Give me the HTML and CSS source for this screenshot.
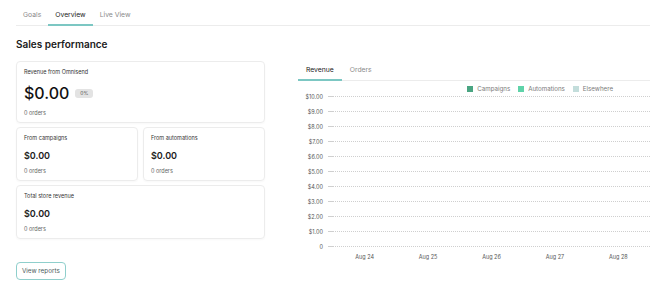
FILE: index.html
```html
<!DOCTYPE html>
<html lang="en">
<head>
    <meta charset="UTF-8">
    <link rel="stylesheet" href="styles.css">
</head>
<body>
    <nav class="tabs">
        <span class="tab">Goals</span>
        <span class="tab active">Overview</span>
        <span class="tab">Live View</span>
    </nav>

    <h2 class="title">Sales performance</h2>

    <div class="content">
        <div class="cards">
            <div class="card">
                <div class="card-label">Revenue from Omnisend</div>
                <div class="big-row">
                    <span class="big-value">$0.00</span>
                    <span class="badge">0%</span>
                </div>
                <div class="orders">0 orders</div>
            </div>
            <div class="card-pair">
                <div class="card">
                    <div class="card-label">From campaigns</div>
                    <div class="value">$0.00</div>
                    <div class="orders">0 orders</div>
                </div>
                <div class="card">
                    <div class="card-label">From automations</div>
                    <div class="value">$0.00</div>
                    <div class="orders">0 orders</div>
                </div>
            </div>
            <div class="card">
                <div class="card-label">Total store revenue</div>
                <div class="value">$0.00</div>
                <div class="orders">0 orders</div>
            </div>
            <button class="btn">View reports</button>
        </div>

        <div class="chart-panel">
            <nav class="tabs chart-tabs">
                <span class="tab active">Revenue</span>
                <span class="tab">Orders</span>
            </nav>
            <div class="legend">
                <span class="legend-item"><i class="swatch campaigns"></i>Campaigns</span>
                <span class="legend-item"><i class="swatch automations"></i>Automations</span>
                <span class="legend-item"><i class="swatch elsewhere"></i>Elsewhere</span>
            </div>
            <div class="grid">
                <div class="row"><span class="y">$10.00</span><span class="line"></span></div>
                <div class="row"><span class="y">$9.00</span><span class="line"></span></div>
                <div class="row"><span class="y">$8.00</span><span class="line"></span></div>
                <div class="row"><span class="y">$7.00</span><span class="line"></span></div>
                <div class="row"><span class="y">$6.00</span><span class="line"></span></div>
                <div class="row"><span class="y">$5.00</span><span class="line"></span></div>
                <div class="row"><span class="y">$4.00</span><span class="line"></span></div>
                <div class="row"><span class="y">$3.00</span><span class="line"></span></div>
                <div class="row"><span class="y">$2.00</span><span class="line"></span></div>
                <div class="row"><span class="y">$1.00</span><span class="line"></span></div>
                <div class="row"><span class="y">0</span><span class="line"></span></div>
            </div>
            <div class="x-axis">
                <span>Aug 24</span>
                <span>Aug 25</span>
                <span>Aug 26</span>
                <span>Aug 27</span>
                <span>Aug 28</span>
            </div>
        </div>
    </div>
</body>
</html>
```

FILE: styles.css
```css
/* Page base */
body {
    margin: 0;
    padding: 0 0 0 16px;
    font-family: Inter, "Noto Sans", sans-serif;
    color: #202020;
    background: #fff;
    overflow: hidden;
}

/* Tabs */
.tabs {
    display: flex;
    border-bottom: 1px solid #ececec;
    padding-top: 10px;
}

.tab {
    font-size: 6.8px;
    color: #8a8a8a;
    padding: 0 7px 5px;
    border-bottom: 2px solid transparent;
    margin-bottom: -1px;
}

.tab.active {
    color: #202020;
    border-bottom-color: #7cc7c3;
}

/* Section title */
.title {
    font-size: 10px;
    font-weight: 600;
    margin: 12px 0 11px;
}

/* Two columns */
.content {
    display: flex;
    gap: 33px;
}

.cards {
    width: 249px;
    display: flex;
    flex-direction: column;
    gap: 4px;
}

.card {
    border: 1px solid #ececec;
    border-radius: 4px;
    padding: 7px 7px 6px;
    box-shadow: 0 1px 2px rgba(0, 0, 0, 0.03);
}

.card-pair {
    display: flex;
    gap: 5px;
}

.card-pair .card {
    flex: 1;
}

.card-label {
    font-size: 5.5px;
    color: #333;
}

.big-row {
    display: flex;
    align-items: center;
    gap: 6px;
    margin: 9px 0 8px;
}

.big-value {
    font-size: 16px;
    font-weight: 500;
    color: #111;
    line-height: 18px;
}

.badge {
    font-size: 5px;
    background: #e3e3e3;
    color: #555;
    padding: 2px 5px;
    border-radius: 3px;
    line-height: 5px;
}

.value {
    font-size: 9px;
    font-weight: 600;
    margin: 9px 0 7px;
}

.orders {
    font-size: 5.5px;
    color: #666;
}

/* Button */
.btn {
    align-self: flex-start;
    margin-top: 19px;
    font-family: inherit;
    font-size: 6.3px;
    color: #4a5a5a;
    background: #fff;
    border: 1px solid #8fcfcc;
    border-radius: 4px;
    padding: 4px 5px;
}

/* Chart */
.chart-panel {
    flex: 1;
    margin-top: 4px;
}

.chart-tabs {
    padding-top: 0;
}

.chart-tabs .tab {
    padding: 0 8px 5px;
}

.legend {
    display: flex;
    justify-content: flex-end;
    gap: 8px;
    padding: 4px 37px 0 0;
    font-size: 6.2px;
    color: #7a7a7a;
}

.legend-item {
    display: flex;
    align-items: center;
    gap: 4px;
}

.swatch {
    width: 6px;
    height: 6px;
    display: inline-block;
}

.campaigns { background: #4aa582; }
.automations { background: #5fd3a9; }
.elsewhere { background: #c3dddb; }

.grid {
    display: flex;
    flex-direction: column;
    margin-top: -3px;
}

.row {
    display: flex;
    align-items: center;
    height: 15px;
}

.y {
    width: 25px;
    text-align: right;
    font-size: 5.5px;
    color: #555;
    margin-right: 5px;
}

.line {
    flex: 1;
    height: 0;
    border-top: 1px dotted #cfcfcf;
    position: relative;
}

.line::before {
    content: "";
    position: absolute;
    left: 0;
    top: -1px;
    width: 5px;
    border-top: 1px solid #cfcfcf;
}

.x-axis {
    display: flex;
    padding-left: 35px;
    font-size: 5.5px;
    color: #555;
}

.x-axis span {
    flex: 1;
    text-align: center;
}
```
